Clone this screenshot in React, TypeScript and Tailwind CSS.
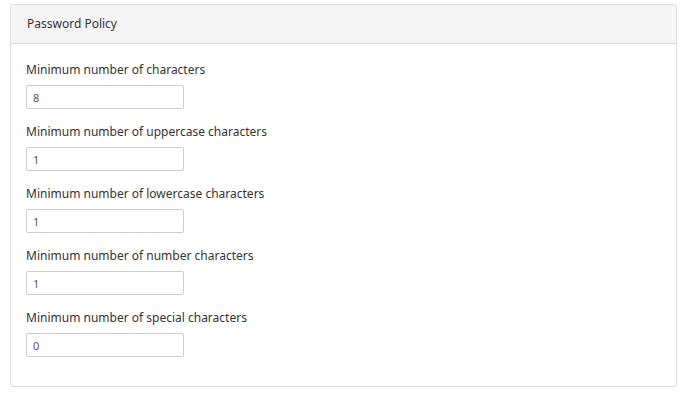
export default function App() {
  const fields = [
    { label: "Minimum number of characters", value: "8" },
    { label: "Minimum number of uppercase characters", value: "1" },
    { label: "Minimum number of lowercase characters", value: "1" },
    { label: "Minimum number of number characters", value: "1" },
    { label: "Minimum number of special characters", value: "0" },
  ]

  return (
    <div className="min-h-[393px] bg-white pt-[4px] pl-[10px] pr-[11px] font-['Noto_Sans',sans-serif] text-[#333]">
      <div className="border border-[#dddddd] rounded-[3px] w-[667px]">
        <div className="h-[39px] bg-[#f5f5f5] border-b border-[#dddddd] rounded-t-[3px] px-[16px] flex items-center text-[12px]">
          Password Policy
        </div>
        <div className="px-[15px] pt-[16px] pb-[16px]">
          {fields.map((f) => (
            <div key={f.label} className="mb-[13px] flex flex-col">
              <label className="h-[20px] leading-[20px] text-[12px]">{f.label}</label>
              <input
                readOnly
                value={f.value}
                className="mt-[5px] w-[158px] h-[24px] border border-[#cccccc] rounded-[2px] px-[6px] text-[11px] text-[#555577] outline-none"
              />
            </div>
          ))}
        </div>
      </div>
    </div>
  )
}
